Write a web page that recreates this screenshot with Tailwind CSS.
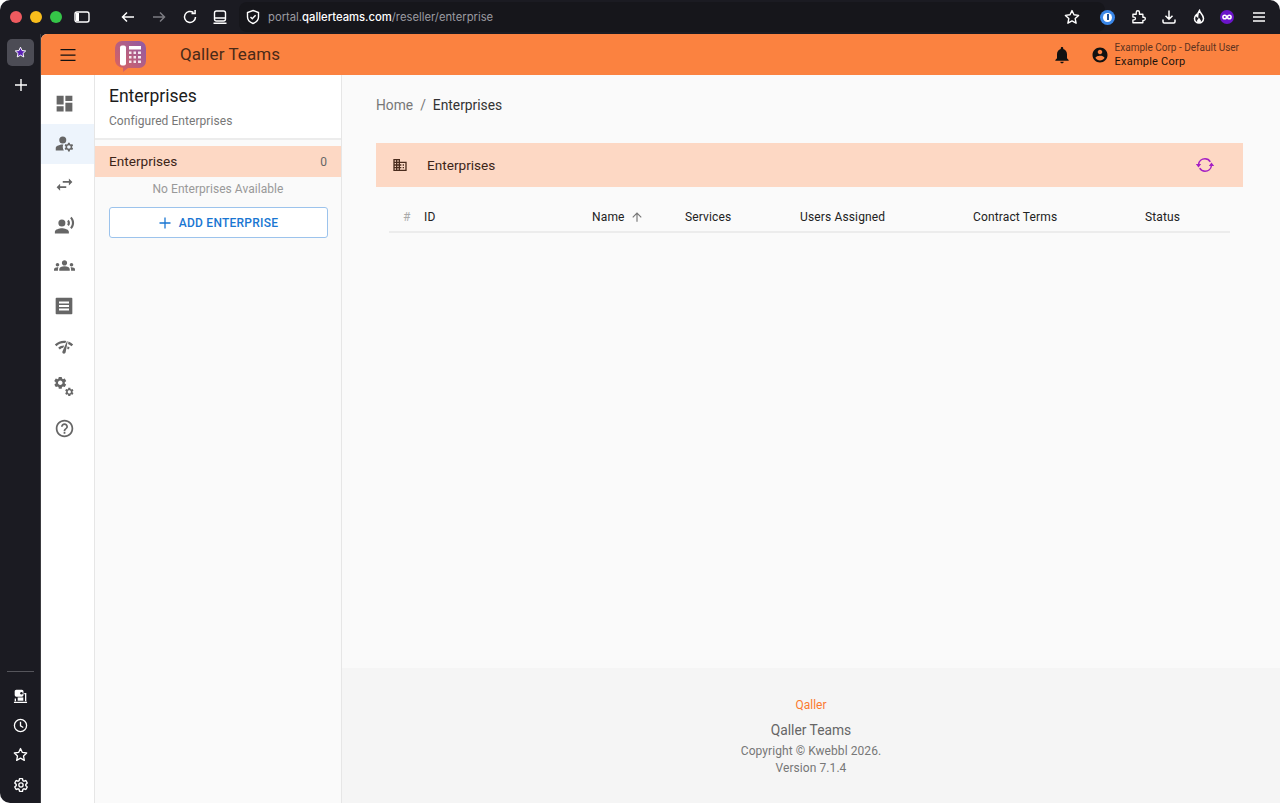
<!DOCTYPE html>
<html lang="en">
<head>
  <meta charset="UTF-8" />
  <title>Qaller Teams</title>
  <script src="https://cdn.jsdelivr.net/npm/@tailwindcss/browser@4"></script>
</head>
<body class="bg-white font-['Roboto',sans-serif]">
<div class="h-[803px] w-[1280px] overflow-hidden rounded-t-[10px] rounded-bl-[10px] bg-[#1b1b22] flex flex-col">

  <!-- Browser toolbar -->
  <div class="h-[34px] shrink-0 flex items-center text-white">
    <div class="flex gap-[8px] pl-[10px] w-[74px]">
      <span class="w-[12px] h-[12px] rounded-full bg-[#ee5a5f]"></span>
      <span class="w-[12px] h-[12px] rounded-full bg-[#f8bd1c]"></span>
      <span class="w-[12px] h-[12px] rounded-full bg-[#35c548]"></span>
    </div>
    <svg class="w-[16px] h-[16px]" viewBox="0 0 16 16" fill="none" stroke="#fff" stroke-width="1.4"><rect x="1" y="3" width="14" height="10" rx="2"/><rect x="2" y="4" width="3" height="8" fill="#fff" stroke="none"/></svg>
    <svg class="w-[16px] h-[16px] ml-[30px]" viewBox="0 0 16 16" fill="none" stroke="#fff" stroke-width="1.5"><path d="M14 8H2.5M7 3.500 2.500 8 7 12.500"/></svg>
    <svg class="w-[16px] h-[16px] ml-[15px]" viewBox="0 0 16 16" fill="none" stroke="#7c7c82" stroke-width="1.5"><path d="M2 8h11.500M9 3.500 13.500 8 9 12.500"/></svg>
    <svg class="w-[16px] h-[16px] ml-[15px]" viewBox="0 0 16 16" fill="none" stroke="#fff" stroke-width="1.5"><path d="M13.500 8A5.500 5.500 0 1 1 11.500 3.700"/><path d="M9.500 4.600h3.600V1" /></svg>
    <svg class="w-[16px] h-[16px] ml-[14px]" viewBox="0 0 16 16" fill="none" stroke="#fff" stroke-width="1.4"><rect x="2.500" y="2" width="11" height="10" rx="2"/><path d="M2.500 9h11M1.500 14.200h13"/></svg>
    <div class="ml-[11px] h-[30px] w-[833px] rounded-l-[8px] bg-[#16161b] flex items-center pl-[6px]">
      <svg class="w-[16px] h-[16px]" viewBox="0 0 16 16" fill="none" stroke="#fff" stroke-width="1.4"><path d="M8 1.500 13.500 3.500V8c0 3-2.400 5.300-5.500 6.500C4.900 13.300 2.500 11 2.500 8V3.500z"/><path d="M5.500 8 7.300 9.800 10.600 6.200"/></svg>
      <span class="ml-[7px] font-['Inter',sans-serif] text-[11.25px] text-[#9b9ba1]">portal.<span class="text-white font-medium">qallerteams.com</span>/reseller/enterprise</span>
    </div>
    <div class="h-[30px] w-[33px] rounded-r-[8px] bg-[#16161b] flex items-center">
      <svg class="w-[16px] h-[16px] -ml-[8px]" viewBox="0 0 16 16" fill="none" stroke="#fff" stroke-width="1.4" stroke-linejoin="round"><path d="m8 1.600 2 4.200 4.600.6-3.400 3.200.9 4.600L8 11.900l-4.100 2.300.9-4.600L1.400 6.400 6 5.800z"/></svg>
    </div>
    <div class="flex items-center -ml-[5px]">
      <span class="w-[15px] h-[15px] rounded-full bg-[#3a87e8] flex items-center justify-center"><span class="w-[9px] h-[9px] rounded-full bg-white flex items-center justify-center"><span class="w-[2px] h-[6px] bg-[#1b4f96]"></span></span></span>
      <svg class="w-[16px] h-[16px] ml-[16px]" viewBox="0 0 16 16" fill="none" stroke="#fff" stroke-width="1.4" stroke-linejoin="round"><path d="M2 5.500h3.500V3.500a1.700 1.700 0 0 1 3.400 0v2h3.600v3.200h1a1.600 1.600 0 0 1 0 3.200h-1v2.600H2v-3h1.200a1.500 1.500 0 0 0 0-3H2z" transform="scale(.95)"/></svg>
      <svg class="w-[16px] h-[16px] ml-[14px]" viewBox="0 0 16 16" fill="none" stroke="#fff" stroke-width="1.5"><path d="M8 1.500V10M4.500 6.800 8 10.300l3.500-3.500M2 10.500v2.200c0 .7.500 1.200 1.200 1.200h9.600c.7 0 1.200-.5 1.200-1.200v-2.200"/></svg>
      <svg class="w-[16px] h-[16px] ml-[14px]" viewBox="0 0 16 16" fill="none" stroke="#fff" stroke-width="1.5"><path d="M8.500 1.500c.4 2.500 4 4.200 4 8a4.500 4.500 0 0 1-9 0c0-1.800.9-3 1.800-3.800.2 1.200.7 1.800 1.300 2.100C6.500 5.500 7 3.200 8.500 1.500z"/><path d="M8 14c-1.200 0-2-.9-2-2 0-1 1.200-2 2-3.200.8 1.200 2 2.200 2 3.200 0 1.100-.8 2-2 2z" fill="#fff" stroke="none"/></svg>
      <span class="w-[14px] h-[14px] ml-[13px] rounded-full bg-[#6a14c9] flex items-center justify-center"><svg class="w-[10px] h-[6px]" viewBox="0 0 10 6" fill="none" stroke="#fff" stroke-width="1.500"><circle cx="2.700" cy="3" r="1.800"/><circle cx="7.300" cy="3" r="1.800"/></svg></span>
      <svg class="w-[14px] h-[14px] ml-[18px]" viewBox="0 0 14 14" fill="none" stroke="#fff" stroke-width="1.500"><path d="M1 3h12M1 7h12M1 11h12"/></svg>
    </div>
  </div>

  <div class="flex flex-1 min-h-0">
    <!-- Browser side rail -->
    <aside class="w-[41px] shrink-0 flex flex-col items-center text-white pl-px pb-[10px] border-r border-[#3b3b40]">
      <div class="mt-[5px] w-[27px] h-[27px] rounded-[5px] bg-[#4c4c55] flex items-center justify-center">
        <svg class="w-[13px] h-[13px]" viewBox="0 0 16 16" fill="#5b21b6" stroke="#fff" stroke-width="1.2" stroke-linejoin="round"><path d="m8 1.500 1.900 4.100 4.500.5-3.300 3 .9 4.400L8 11.300l-4 2.200.9-4.400-3.300-3 4.500-.5z"/></svg>
      </div>
      <svg class="w-[12px] h-[12px] mt-[13px]" viewBox="0 0 12 12" stroke="#fff" stroke-width="1.400"><path d="M6 0v12M0 6h12"/></svg>
      <div class="mt-auto w-[27px] h-px bg-[#55555b]"></div>
      <svg class="w-[15px] h-[15px] mt-[17px]" viewBox="0 0 16 16" fill="none" stroke="#fff" stroke-width="1.400"><rect x="2.500" y="1.500" width="8" height="6" rx="1" fill="#fff"/><circle cx="9" cy="4.500" r="1.300" fill="#1b1b22" stroke="none"/><path d="M12 5h1.500v8M2.500 10v3M1 14.300h14"/><rect x="5" y="9" width="6" height="3.500" fill="#fff" stroke="none"/></svg>
      <svg class="w-[15px] h-[15px] mt-[14px]" viewBox="0 0 16 16" fill="none" stroke="#fff" stroke-width="1.400"><circle cx="8" cy="8" r="6.500"/><path d="M8 4v4.300l3 1.800"/></svg>
      <svg class="w-[15px] h-[15px] mt-[14px]" viewBox="0 0 16 16" fill="none" stroke="#fff" stroke-width="1.400" stroke-linejoin="round"><path d="m8 1.600 2 4.200 4.600.6-3.400 3.200.9 4.600L8 11.900l-4.100 2.300.9-4.600L1.400 6.400 6 5.800z"/></svg>
      <svg class="w-[16px] h-[16px] mt-[15px]" viewBox="0 0 24 24" fill="none" stroke="#fff" stroke-width="2"><path d="M19.140 12.940c.04-.3.06-.61.06-.94 0-.32-.02-.64-.07-.94l2.030-1.580c.18-.14.23-.41.12-.61l-1.920-3.320c-.12-.22-.37-.29-.59-.22l-2.390.96c-.5-.38-1.030-.7-1.620-.94l-.36-2.540c-.04-.24-.24-.41-.48-.41h-3.840c-.24 0-.43.17-.47.41l-.36 2.540c-.59.24-1.130.57-1.620.94l-2.390-.96c-.22-.08-.47 0-.59.22L2.740 8.870c-.12.21-.08.47.12.61l2.030 1.580c-.05.3-.09.63-.09.94s.02.64.07.94l-2.030 1.580c-.18.14-.23.41-.12.61l1.920 3.320c.12.22.37.29.59.22l2.390-.96c.5.38 1.030.7 1.620.94l.36 2.540c.05.24.24.41.48.41h3.840c.24 0 .44-.17.47-.41l.36-2.540c.59-.24 1.130-.56 1.620-.94l2.390.96c.22.08.47 0 .59-.22l1.920-3.320c.12-.22.07-.47-.12-.61l-2.010-1.580z"/><circle cx="12" cy="12" r="3.200"/></svg>
    </aside>

    <!-- App -->
    <div class="flex-1 min-w-0 flex flex-col bg-[#fafafa] rounded-tl-[6px] overflow-hidden">
      <header class="h-[41px] shrink-0 bg-[#fb8240] flex items-center">
        <svg class="w-[20px] h-[20px] ml-[17px] fill-[#111]" viewBox="0 0 20 20"><path d="M2.500 4h15v1.300h-15zm0 5.400h15v1.300h-15zm0 5.300h15V16h-15z"/></svg>
        <svg class="w-[34px] h-[34px] ml-[35px] mt-[2px]" viewBox="0 0 34 34">
          <defs><linearGradient id="lg" x1="0" y1="1" x2="1" y2="0"><stop offset="0" stop-color="#e0645a"/><stop offset="1" stop-color="#8d5aa8"/></linearGradient></defs>
          <path d="M9 2h17a7 7 0 0 1 7 7v13a7 7 0 0 1-7 7H15l-5 4v-4.300A8 8 0 0 1 2 22V9a7 7 0 0 1 7-7z" fill="url(#lg)"/>
          <rect x="7" y="6.500" width="6" height="20" rx="2" fill="#fff"/>
          <rect x="16" y="7" width="12" height="3.500" fill="#fff"/>
          <path d="M16 12.500h2.500v2.500H16zm4.500 0H23v2.500h-2.500zm4.500 0h3v2.500h-3zM16 17h2.500v2.500H16zm4.500 0H23v2.500h-2.500zm4.500 0h3v2.500h-3zM16 21.500h2.500V24H16zm4.500 0H23V24h-2.500zm4.500 0h3V24h-3z" fill="#fff" opacity=".85"/>
        </svg>
        <span class="ml-[33px] text-[17px] tracking-[0.005em] text-[#4a2a18]">Qaller Teams</span>
        <div class="ml-auto flex items-center">
          <svg class="w-[20px] h-[20px] fill-[#111]" viewBox="0 0 24 24"><path d="M12 22c1.100 0 2-.9 2-2h-4c0 1.100.89 2 2 2zm6-6v-5c0-3.070-1.640-5.640-4.500-6.320V4c0-.83-.67-1.500-1.500-1.500s-1.500.67-1.500 1.500v.68C7.630 5.360 6 7.920 6 11v5l-2 2v1h16v-1l-2-2z"/></svg>
          <svg class="w-[18px] h-[18px] ml-[19px] fill-[#111]" viewBox="0 0 24 24"><path d="M12 2C6.480 2 2 6.480 2 12s4.480 10 10 10 10-4.480 10-10S17.520 2 12 2zm0 3c1.660 0 3 1.340 3 3s-1.340 3-3 3-3-1.340-3-3 1.340-3 3-3zm0 14.200c-2.500 0-4.710-1.280-6-3.220.03-1.990 4-3.080 6-3.080 1.990 0 5.970 1.090 6 3.080-1.290 1.940-3.500 3.220-6 3.220z"/></svg>
          <div class="ml-[6px] mr-[41px] pt-px leading-none">
            <div class="text-[10px] text-[#5c3320]">Example Corp - Default User</div>
            <div class="text-[11px] text-[#1b120d] mt-[3px] tracking-[0.02em]">Example Corp</div>
          </div>
        </div>
      </header>

      <div class="flex flex-1 min-h-0">
        <!-- Nav icons -->
        <nav class="w-[54px] shrink-0 bg-white border-r border-[#e6e6e6] pt-[8px] text-[#666]">
          <a class="h-[40.6px] flex items-center justify-center pr-[7px]"><svg class="w-[21px] h-[21px] fill-[#666]" viewBox="0 0 24 24"><path d="M3 13h8V3H3v10zm0 8h8v-6H3v6zm10 0h8V11h-8v10zm0-18v6h8V3h-8z"/></svg></a>
          <a class="h-[40.6px] flex items-center justify-center pr-[7px] bg-[#edf4fc]"><svg class="w-[21px] h-[21px] fill-[#666]" viewBox="0 0 24 24"><circle cx="10" cy="8" r="4"/><path d="M10.670 13.020C10.450 13.010 10.230 13 10 13c-2.420 0-4.680.67-6.610 1.820-.88.52-1.390 1.500-1.390 2.530V20h9.260c-.79-1.130-1.260-2.510-1.260-4 0-1.070.25-2.070.67-2.980z"/><path d="M20.750 16c0-.22-.03-.42-.06-.63l1.140-1.010-1-1.730-1.450.49c-.32-.27-.68-.48-1.080-.63L18 11h-2l-.3 1.490c-.4.15-.76.36-1.080.63l-1.450-.49-1 1.730 1.140 1.010c-.03.21-.06.41-.06.63s.03.42.06.63l-1.140 1.010 1 1.730 1.450-.49c.32.27.68.48 1.080.63L16 21h2l.3-1.490c.4-.15.76-.36 1.080-.63l1.450.49 1-1.730-1.140-1.010c.03-.21.06-.41.06-.63zM17 18c-1.100 0-2-.9-2-2s.9-2 2-2 2 .9 2 2-.9 2-2 2z"/></svg></a>
          <a class="h-[40.6px] flex items-center justify-center pr-[7px]"><svg class="w-[21px] h-[21px] fill-[#666]" viewBox="0 0 24 24"><path d="M6.990 11L3 15l3.990 4v-3H14v-2H6.990v-3zM21 9l-3.990-4v3H10v2h7.010v3L21 9z"/></svg></a>
          <a class="h-[40.6px] flex items-center justify-center pr-[7px]"><svg class="w-[21px] h-[21px] fill-[#666]" viewBox="0 0 24 24"><circle cx="9" cy="9" r="4"/><path d="M9 15c-2.670 0-8 1.340-8 4v2h16v-2c0-2.660-5.330-4-8-4zm7.760-9.640l-1.680 1.690c.84 1.180.84 2.710 0 3.890l1.680 1.690c2.020-2.020 2.020-5.070 0-7.270zM20.070 2l-1.630 1.630c2.770 3.020 2.770 7.560 0 10.740L20.070 16c3.900-3.890 3.910-9.950 0-14z"/></svg></a>
          <a class="h-[40.6px] flex items-center justify-center pr-[7px]"><svg class="w-[21px] h-[21px] fill-[#666]" viewBox="0 0 24 24"><path d="M12 12.750c1.630 0 3.070.39 4.240.9 1.080.48 1.760 1.560 1.760 2.730V18H6v-1.610c0-1.180.68-2.260 1.760-2.730 1.170-.52 2.610-.91 4.240-.91zM4 13c1.100 0 2-.9 2-2s-.9-2-2-2-2 .9-2 2 .9 2 2 2zm1.130 1.100c-.37-.06-.74-.1-1.130-.1-.99 0-1.930.21-2.780.58C.48 14.900 0 15.620 0 16.430V18h4.500v-1.610c0-.83.23-1.610.63-2.290zM20 13c1.100 0 2-.9 2-2s-.9-2-2-2-2 .9-2 2 .9 2 2 2zm4 3.430c0-.81-.48-1.530-1.220-1.850-.85-.37-1.790-.58-2.780-.58-.39 0-.76.04-1.130.1.4.68.63 1.460.63 2.290V18H24v-1.570zM12 6c1.660 0 3 1.340 3 3s-1.340 3-3 3-3-1.340-3-3 1.340-3 3-3z"/></svg></a>
          <a class="h-[40.6px] flex items-center justify-center pr-[7px]"><svg class="w-[20px] h-[20px] fill-[#666]" viewBox="0 0 24 24"><path fill-rule="evenodd" d="M3 2h18c.6 0 1 .4 1 1v18c0 .6-.4 1-1 1H3c-.6 0-1-.4-1-1V3c0-.6.4-1 1-1zM6 6.500v2.600h12V6.500zm0 4.200v2.600h12v-2.600zm0 4.200v2.600h12v-2.600z"/></svg></a>
          <a class="h-[40.6px] flex items-center justify-center pr-[7px]"><svg class="w-[20px] h-[20px] fill-[#666]" viewBox="0 0 24 24"><path d="M15.900 5c-.17 0-.32.09-.41.23l-.07.15-5.180 11.650c-.16.29-.26.61-.26.96 0 1.110.9 2.010 2.010 2.010.96 0 1.770-.68 1.960-1.590l.01-.03L16.400 5.500c0-.28-.22-.5-.5-.5zM1 9l2 2c2.880-2.880 6.790-4.080 10.530-3.620l1.190-2.680C9.890 3.840 4.740 5.270 1 9zm20 2l2-2c-1.640-1.640-3.550-2.820-5.590-3.570l-.53 2.820c1.500.62 2.900 1.530 4.120 2.750zm-4 4l2-2c-.8-.8-1.700-1.420-2.660-1.890l-.55 2.920c.42.27.83.59 1.210.97zM5 13l2 2c1.130-1.130 2.560-1.790 4.030-2l1.280-2.880c-2.630-.08-5.300.87-7.310 2.880z"/></svg></a>
          <a class="h-[40.6px] flex items-center justify-center pr-[7px]"><svg class="w-[21px] h-[21px] fill-[#666]" viewBox="0 0 24 24"><g transform="translate(-1.500 -2) scale(.72)"><path fill-rule="evenodd" d="M19.140 12.940c.04-.3.06-.61.06-.94 0-.32-.02-.64-.07-.94l2.030-1.580c.18-.14.23-.41.12-.61l-1.920-3.320c-.12-.22-.37-.29-.59-.22l-2.390.96c-.5-.38-1.030-.7-1.620-.94l-.36-2.540c-.04-.24-.24-.41-.48-.41h-3.840c-.24 0-.43.17-.47.41l-.36 2.540c-.59.24-1.130.57-1.620.94l-2.390-.96c-.22-.08-.47 0-.59.22L2.740 8.870c-.12.21-.08.47.12.61l2.030 1.580c-.05.3-.09.63-.09.94s.02.64.07.94l-2.030 1.580c-.18.14-.23.41-.12.61l1.920 3.320c.12.22.37.29.59.22l2.390-.96c.5.38 1.030.7 1.620.94l.36 2.540c.05.24.24.41.48.41h3.840c.24 0 .44-.17.47-.41l.36-2.540c.59-.24 1.130-.56 1.620-.94l2.390.96c.22.08.47 0 .59-.22l1.920-3.320c.12-.22.07-.47-.12-.61l-2.010-1.580zM12 15.600c-1.980 0-3.600-1.620-3.600-3.600s1.620-3.600 3.600-3.600 3.600 1.620 3.600 3.600-1.620 3.600-3.600 3.600z"/></g><g transform="translate(11.500 11) scale(.5)"><path fill-rule="evenodd" d="M19.140 12.940c.04-.3.06-.61.06-.94 0-.32-.02-.64-.07-.94l2.030-1.580c.18-.14.23-.41.12-.61l-1.920-3.320c-.12-.22-.37-.29-.59-.22l-2.390.96c-.5-.38-1.030-.7-1.620-.94l-.36-2.540c-.04-.24-.24-.41-.48-.41h-3.840c-.24 0-.43.17-.47.41l-.36 2.540c-.59.24-1.130.57-1.620.94l-2.390-.96c-.22-.08-.47 0-.59.22L2.740 8.870c-.12.21-.08.47.12.61l2.030 1.580c-.05.3-.09.63-.09.94s.02.64.07.94l-2.030 1.580c-.18.14-.23.41-.12.61l1.920 3.320c.12.22.37.29.59.22l2.390-.96c.5.38 1.030.7 1.620.94l.36 2.540c.05.24.24.41.48.41h3.840c.24 0 .44-.17.47-.41l.36-2.540c.59-.24 1.130-.56 1.620-.94l2.390.96c.22.08.47 0 .59-.22l1.920-3.320c.12-.22.07-.47-.12-.61l-2.010-1.580zM12 15.600c-1.980 0-3.600-1.620-3.600-3.600s1.620-3.600 3.600-3.600 3.600 1.620 3.600 3.600-1.620 3.600-3.600 3.600z"/></g></svg></a>
          <a class="h-[40.6px] flex items-center justify-center pr-[7px]"><svg class="w-[21px] h-[21px] fill-[#666]" viewBox="0 0 24 24"><path d="M11 18h2v-2h-2v2zm1-16C6.480 2 2 6.480 2 12s4.480 10 10 10 10-4.480 10-10S17.520 2 12 2zm0 18c-4.410 0-8-3.590-8-8s3.590-8 8-8 8 3.590 8 8-3.590 8-8 8zm0-14c-2.210 0-4 1.790-4 4h2c0-1.100.9-2 2-2s2 .9 2 2c0 2-3 1.750-3 5h2c0-2.250 3-2.500 3-5 0-2.210-1.790-4-4-4z"/></svg></a>
        </nav>

        <!-- Sub panel -->
        <section class="w-[247px] shrink-0 border-r border-[#e6e6e6] bg-[#fafafa]">
          <div class="h-[65px] bg-white border-b-2 border-[#ececec] px-[14px] pt-[10px]">
            <h1 class="text-[17.5px] leading-[22px] text-[#1c1c1c]">Enterprises</h1>
            <p class="text-[12px] mt-[6px] leading-[16px] tracking-[0.005em] text-[#777]">Configured Enterprises</p>
          </div>
          <div class="mt-[6px] h-[31px] bg-[#fdd8c4] flex items-center justify-between pl-[14px] pr-[14px] text-[13.6px] text-[#3c2418]">
            <span>Enterprises</span><span class="text-[12px] text-[#666]">0</span>
          </div>
          <p class="mt-[5px] text-center text-[12px] leading-[15px] text-[#999] tracking-[0.004em]">No Enterprises Available</p>
          <button class="mt-[10px] ml-[14px] w-[219px] h-[31px] rounded-[3px] border border-[#9cc3ec] bg-white flex items-center justify-center gap-[8px] text-[12px] font-medium tracking-[0.02em] text-[#1976d2]">
            <svg class="w-[12px] h-[12px]" viewBox="0 0 12 12" stroke="#1976d2" stroke-width="1.300"><path d="M6 .5v11M.5 6h11"/></svg>
            ADD ENTERPRISE
          </button>
        </section>

        <!-- Main -->
        <main class="flex-1 min-w-0 flex flex-col">
          <div class="flex-1 pl-[34px] pr-[37px]">
            <div class="mt-[22px] h-[17px] flex items-center text-[13.8px] text-[#777]">
              <span>Home</span><span class="mx-[7px]">/</span><span class="text-[#333]">Enterprises</span>
            </div>
            <div class="mt-[29px] h-[44px] bg-[#fdd8c4] flex items-center">
              <svg class="w-[16px] h-[16px] ml-[16px] fill-[#4a2c1d]" viewBox="0 0 24 24"><path d="M12 7V3H2v18h20V7H12zM6 19H4v-2h2v2zm0-4H4v-2h2v2zm0-4H4V9h2v2zm0-4H4V5h2v2zm4 12H8v-2h2v2zm0-4H8v-2h2v2zm0-4H8V9h2v2zm0-4H8V5h2v2zm10 12h-8v-2h2v-2h-2v-2h2v-2h-2V9h8v10zm-2-8h-2v2h2v-2zm0 4h-2v2h2v-2z"/></svg>
              <span class="ml-[19px] text-[13.6px] text-[#3c2418]">Enterprises</span>
              <svg class="w-[20px] h-[20px] ml-auto mr-[28px]" viewBox="0 0 20 20" fill="none" stroke="#a51fc4" stroke-width="1.500"><path d="M3.500 9.500C4 6 6.800 3.800 10 3.800c2.500 0 4.300 1.200 5.300 3M16.500 10.500C16 14 13.200 16.200 10 16.200c-2.500 0-4.300-1.200-5.300-3"/><path d="M.8 9h5.400L3.500 12.500zM19.200 11h-5.400L16.500 7.500z" fill="#a51fc4" stroke="none"/></svg>
            </div>
            <div class="mx-[13px] mt-[14px] h-[32px] pt-px border-b-2 border-[#ececec] grid grid-cols-[35px_168px_93px_115px_173px_172px_1fr] items-center text-[12px] tracking-[0.012em] text-[#222]">
              <span class="pl-[14px] text-[#aaa]">#</span>
              <span>ID</span>
              <span class="flex items-center gap-[5px]">Name <svg class="w-[14px] h-[14px] fill-[#777]" viewBox="0 0 24 24"><path d="M4 12l1.410 1.410L11 7.830V20h2V7.830l5.580 5.590L20 12l-8-8-8 8z"/></svg></span>
              <span>Services</span>
              <span>Users Assigned</span>
              <span>Contract Terms</span>
              <span>Status</span>
            </div>
          </div>
          <footer class="h-[135px] shrink-0 bg-[#f5f5f5] text-center pt-[30px]">
            <p class="text-[12px] leading-[15px] text-[#fb7a30]">Qaller</p>
            <p class="mt-[9px] text-[13.8px] leading-[17px] text-[#666]">Qaller Teams</p>
            <p class="mt-[4px] text-[12px] leading-[16px] tracking-[0.006em] text-[#777]">Copyright © Kwebbl 2026.</p>
            <p class="mt-[1px] text-[12px] leading-[16px] tracking-[0.006em] text-[#777]">Version 7.1.4</p>
          </footer>
        </main>
      </div>
    </div>
  </div>
</div>
</body>
</html>
